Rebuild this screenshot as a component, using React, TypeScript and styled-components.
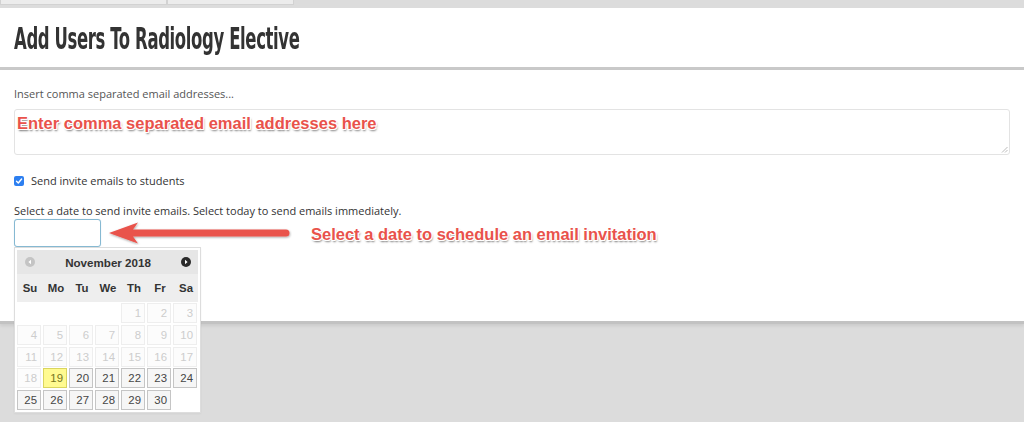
import React from "react";
import styled, { createGlobalStyle } from "styled-components";

const GlobalStyle = createGlobalStyle`
  html, body { margin: 0; padding: 0; }
  body {
    background: #dcdcdc;
    font-family: "Open Sans", "DejaVu Sans", sans-serif;
    color: #333;
    overflow: hidden;
  }
  * { box-sizing: border-box; }
`;

const Page = styled.div`
  width: 1024px;
  height: 422px;
  background: #dcdcdc;
`;

const TopStrip = styled.div`
  height: 8px;
  display: flex;
  align-items: flex-start;
  background: #dcdcdc;
`;

const Tab = styled.div<{ $w: number }>`
  width: ${(p) => p.$w}px;
  height: 5px;
  background: #ececec;
  border: 1px solid #d2d2d2;
  border-top: none;
`;

const HeaderCard = styled.header`
  height: 62px;
  background: #fff;
  border-bottom: 3px solid #c9c9c9;
  display: flex;
  align-items: center;
  padding-left: 14px;
`;

const Title = styled.h1`
  margin: 0;
  font-family: "DejaVu Sans Condensed", "DejaVu Sans", sans-serif;
  font-weight: bold;
  font-size: 30px;
  color: #333;
  letter-spacing: -0.6px;
  transform: scaleX(0.61);
  transform-origin: left center;
  white-space: nowrap;
  margin-top: 2px;
`;

const MainCard = styled.main`
  position: relative;
  height: 254px;
  background: #fff;
  border-bottom: 3px solid #c2c2c2;
  box-shadow: 0 2px 3px rgba(0, 0, 0, 0.08);
  padding: 16px 14px 0 14px;
  display: flex;
  flex-direction: column;
`;

const Hint = styled.div`
  font-size: 11px;
  line-height: 15px;
  color: #555;
`;

const FakeTextarea = styled.div`
  position: relative;
  margin-top: 8px;
  width: 996px;
  height: 46px;
  border: 1px solid #e3e3e3;
  border-radius: 3px;
  padding: 2px 2px;
`;

const Annotation = styled.span`
  font-family: "Liberation Sans", Arial, sans-serif;
  font-weight: bold;
  font-size: 16.5px;
  color: #e9524b;
  white-space: nowrap;
  text-shadow:
    -1px 0 0 #fff, 1px 0 0 #fff, 0 -1px 0 #fff, 0 1px 0 #fff,
    -1px -1px 0 #fff, 1px 1px 0 #fff, -1px 1px 0 #fff, 1px -1px 0 #fff,
    1px 2px 2px rgba(0, 0, 0, 0.55);
`;

const Grip = styled.svg`
  position: absolute;
  right: 1px;
  bottom: 1px;
`;

const CheckRow = styled.label`
  margin-top: 18px;
  display: flex;
  align-items: center;
  gap: 7px;
  font-size: 11px;
  line-height: 15px;
  color: #333;
`;

const CheckBox = styled.span`
  width: 10px;
  height: 10px;
  border-radius: 2px;
  background: #2d7ff0;
  display: inline-flex;
  align-items: center;
  justify-content: center;
`;

const DateHint = styled(Hint)`
  margin-top: 15px;
  color: #333;
`;

const DateRow = styled.div`
  position: relative;
  margin-top: 1px;
  display: flex;
  align-items: center;
`;

const DateInput = styled.div`
  width: 87px;
  height: 28px;
  border: 1px solid #86b9d2;
  border-radius: 3px;
  background: #fff;
  box-shadow: 0 0 1px rgba(100, 160, 200, 0.4);
`;

const Arrow = styled.svg`
  margin-left: 7px;
  flex: none;
`;

const DateAnnotation = styled(Annotation)`
  margin-left: 19px;
  margin-top: 2px;
`;

const Picker = styled.div`
  position: absolute;
  left: 0;
  top: 28px;
  width: 187px;
  background: #fff;
  border: 1px solid #dddddd;
  padding: 2px 2px 2px 2px;
  font-family: "Liberation Sans", Arial, sans-serif;
  box-shadow: 0 1px 2px rgba(0, 0, 0, 0.05);
  z-index: 2;
`;

const PickerHeader = styled.div`
  height: 24px;
  background: #e6e6e6;
  display: flex;
  align-items: center;
  justify-content: space-between;
  padding: 0 7px 0 8px;
  font-size: 11.6px;
  font-weight: bold;
  color: #333;
`;

const NavIcon = styled.svg``;

const WeekRow = styled.div`
  height: 28px;
  background: #eeeeee;
  display: grid;
  grid-template-columns: repeat(7, 26px);
  align-items: center;
  justify-items: center;
  font-size: 11.4px;
  font-weight: bold;
  color: #333;
`;

const DayGrid = styled.div`
  margin-top: 1px;
  display: grid;
  grid-template-columns: repeat(7, 24px);
  grid-auto-rows: 20px;
  column-gap: 2px;
  row-gap: 1.8px;
`;

type Kind = "empty" | "off" | "on" | "today";

const Day = styled.div<{ $kind: Kind }>`
  border: 1px solid
    ${(p) =>
      p.$kind === "empty" ? "transparent" : p.$kind === "off" ? "#eeeeee" : p.$kind === "today" ? "#dad55e" : "#c5c5c5"};
  background: ${(p) =>
    p.$kind === "empty" ? "transparent" : p.$kind === "off" ? "#fcfcfc" : p.$kind === "today" ? "#fffa90" : "#f6f6f6"};
  color: ${(p) => (p.$kind === "off" ? "#cdcdcd" : p.$kind === "today" ? "#777620" : "#454545")};
  font-size: 11.4px;
  display: flex;
  align-items: center;
  justify-content: flex-end;
  padding-right: 3px;
`;

const weekdays = ["Su", "Mo", "Tu", "We", "Th", "Fr", "Sa"];

const cells: { n: string; k: Kind }[] = [];
for (let i = 0; i < 4; i++) cells.push({ n: "", k: "empty" });
for (let d = 1; d <= 30; d++) {
  cells.push({ n: String(d), k: d < 19 ? "off" : d === 19 ? "today" : "on" });
}

export default function App() {
  return (
    <Page>
      <GlobalStyle />
      <TopStrip>
        <Tab $w={167} />
        <Tab $w={127} />
      </TopStrip>
      <HeaderCard>
        <Title>Add Users To Radiology Elective</Title>
      </HeaderCard>
      <MainCard>
        <Hint>Insert comma separated email addresses...</Hint>
        <FakeTextarea>
          <Annotation>Enter comma separated email addresses here</Annotation>
          <Grip width="7" height="7" viewBox="0 0 7 7">
            <path d="M6.5 1 L1 6.5 M6.5 4 L4 6.5" stroke="#aaa" strokeWidth="0.8" />
          </Grip>
        </FakeTextarea>
        <CheckRow>
          <CheckBox>
            <svg width="8" height="8" viewBox="0 0 8 8">
              <path d="M1.5 4.2 L3.3 6 L6.6 2" stroke="#fff" strokeWidth="1.4" fill="none" strokeLinecap="round" strokeLinejoin="round" />
            </svg>
          </CheckBox>
          Send invite emails to students
        </CheckRow>
        <DateHint>Select a date to send invite emails. Select today to send emails immediately.</DateHint>
        <DateRow>
          <DateInput />
          <Arrow width="184" height="24" viewBox="0 0 184 24">
            <defs>
              <filter id="sh" x="-5%" y="-30%" width="110%" height="160%">
                <feDropShadow dx="0.5" dy="1" stdDeviation="0.8" floodColor="#000" floodOpacity="0.35" />
              </filter>
            </defs>
            <g filter="url(#sh)">
              <path d="M1 12 L30 1.5 L25 8.5 L178 8.5 A3.5 3.5 0 0 1 178 15.5 L25 15.5 L30 22.5 Z" fill="#e9524b" />
            </g>
          </Arrow>
          <DateAnnotation>Select a date to schedule an email invitation</DateAnnotation>
          <Picker>
            <PickerHeader>
              <NavIcon width="10" height="10" viewBox="0 0 10 10">
                <circle cx="5" cy="5" r="5" fill="#c4c4c4" />
                <path d="M6 2.8 L3.4 5 L6 7.2 Z" fill="#fff" />
              </NavIcon>
              <span>November 2018</span>
              <NavIcon width="10" height="10" viewBox="0 0 10 10">
                <circle cx="5" cy="5" r="5" fill="#2b2b2b" />
                <path d="M4 2.8 L6.6 5 L4 7.2 Z" fill="#fff" />
              </NavIcon>
            </PickerHeader>
            <WeekRow>
              {weekdays.map((w) => (
                <span key={w}>{w}</span>
              ))}
            </WeekRow>
            <DayGrid>
              {cells.map((c, i) => (
                <Day key={i} $kind={c.k}>
                  {c.n}
                </Day>
              ))}
            </DayGrid>
          </Picker>
        </DateRow>
      </MainCard>
    </Page>
  );
}
